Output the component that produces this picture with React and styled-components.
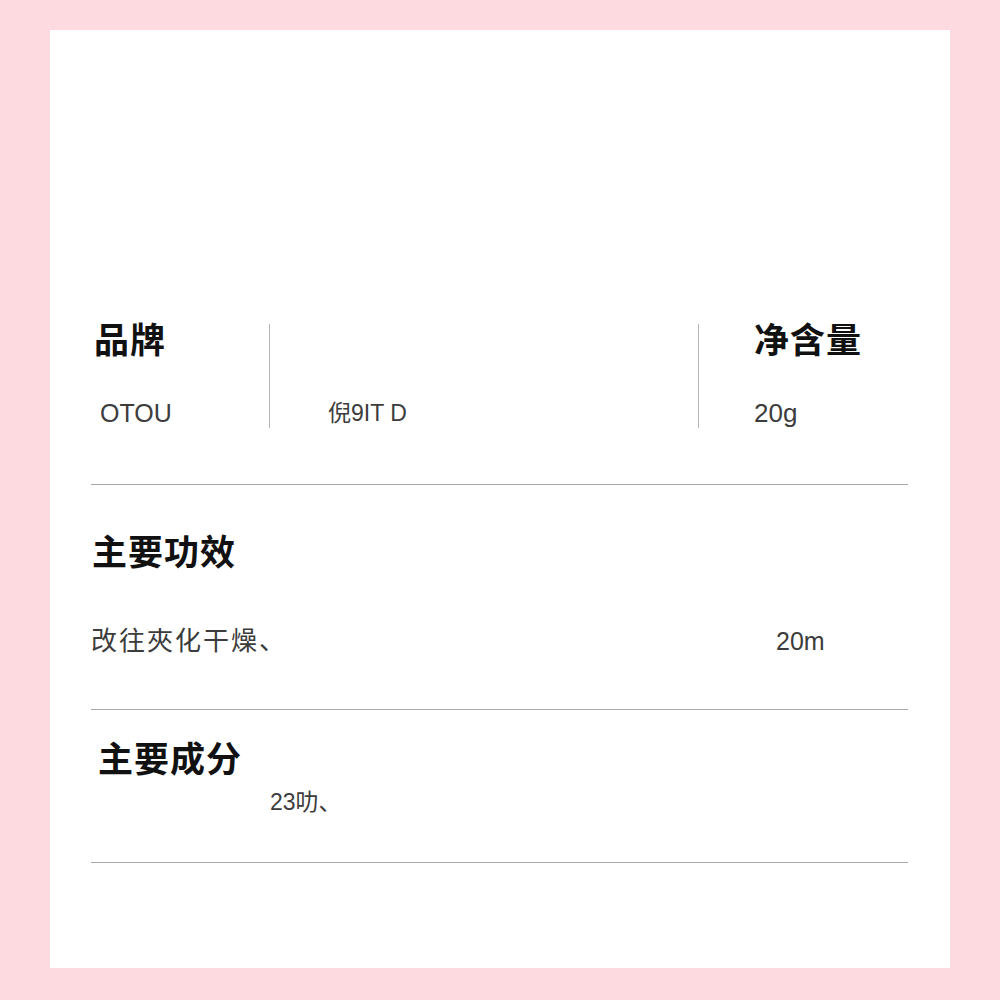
import React from 'react'
import styled, { createGlobalStyle } from 'styled-components'

const GlobalStyle = createGlobalStyle`
  html, body {
    margin: 0;
    padding: 0;
    background: #fcdadf;
  }
  body {
    font-family: "Noto Sans CJK SC", "Noto Sans", sans-serif;
  }
`

const Frame = styled.div`
  width: 1000px;
  height: 1000px;
  box-sizing: border-box;
  padding: 30px 50px 32px 50px;
  background: #fcdadf;
`

const Panel = styled.div`
  height: 100%;
  box-sizing: border-box;
  background: #fff;
  padding: 294px 42px 0 41px;
  display: flex;
  flex-direction: column;
`

const InfoRow = styled.div`
  display: grid;
  grid-template-columns: 178px 429px 1fr;
  height: 100px;
  margin-bottom: 60px;
`

const InfoCol = styled.div`
  display: flex;
  flex-direction: column;
  padding-left: ${p => p.$indent || 0}px;
  border-left: ${p => (p.$divided ? '1px solid #b5b5b5' : 'none')};
`

const Heading = styled.div`
  font-size: 35px;
  font-weight: 700;
  color: #111;
  line-height: ${p => p.$lh || 40}px;
  letter-spacing: 1px;
  padding-left: ${p => p.$indent || 0}px;
  white-space: nowrap;
`

const Value = styled.div`
  font-family: "Liberation Sans", "Noto Sans CJK SC", sans-serif;
  font-size: ${p => p.$size || 24}px;
  font-weight: 400;
  color: #3c3c3c;
  line-height: 30px;
  letter-spacing: ${p => p.$spacing || 0}px;
  margin-top: ${p => p.$top || 0}px;
  padding-left: ${p => p.$indent || 0}px;
  white-space: nowrap;
`

const Rule = styled.div`
  height: 1px;
  background: #a8a8a8;
`

const Section = styled.div`
  padding-top: ${p => p.$top}px;
  padding-bottom: ${p => p.$bottom}px;
  display: flex;
  flex-direction: column;
`

const ValueLine = styled.div`
  display: grid;
  grid-template-columns: 685px 1fr;
  margin-top: ${p => p.$top || 0}px;
  align-items: center;
`

export default function App() {
  return (
    <>
      <GlobalStyle />
      <Frame>
        <Panel>
          <InfoRow>
            <InfoCol>
              <Heading $lh={28} $indent={3}>品牌</Heading>
              <Value $top={46} $indent={9} $size={25}>OTOU</Value>
            </InfoCol>
            <InfoCol $divided $indent={58}>
              <Heading $lh={28}>&nbsp;</Heading>
              <Value $top={46} $size={23}>倪9IT D</Value>
            </InfoCol>
            <InfoCol $divided $indent={55}>
              <Heading $lh={28}>净含量</Heading>
              <Value $top={46} $size={26}>20g</Value>
            </InfoCol>
          </InfoRow>
          <Rule />
          <Section $top={45} $bottom={53}>
            <Heading $indent={1}>主要功效</Heading>
            <ValueLine $top={56}>
              <Value $size={26} $spacing={2}>改往夾化干燥、</Value>
              <Value $size={25}>20m</Value>
            </ValueLine>
          </Section>
          <Rule />
          <Section $top={27} $bottom={45}>
            <Heading $indent={7}>主要成分</Heading>
            <Value $top={10} $indent={179} $size={23}>23叻、</Value>
          </Section>
          <Rule />
        </Panel>
      </Frame>
    </>
  )
}
